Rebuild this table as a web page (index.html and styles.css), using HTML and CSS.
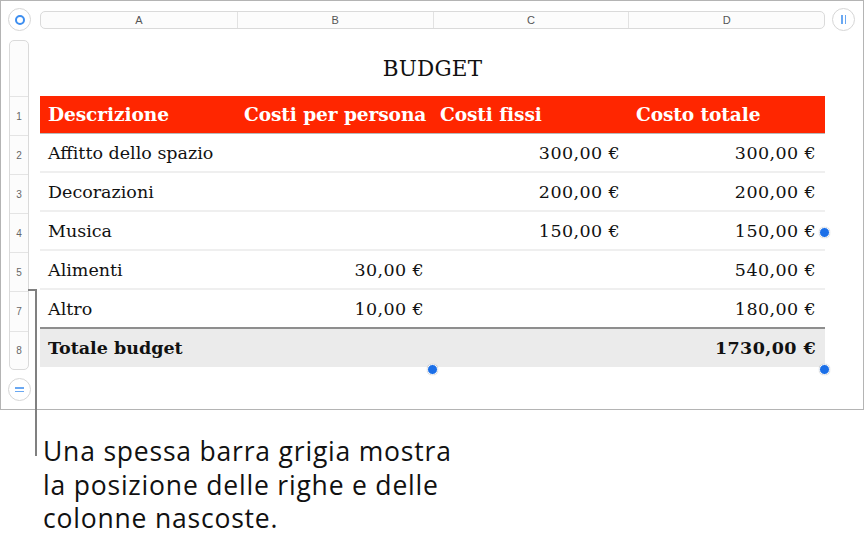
FILE: index.html
```html
<!DOCTYPE html>
<html lang="it">
<head>
<meta charset="utf-8">
<title>Budget</title>
<link rel="stylesheet" href="styles.css">
</head>
<body>
<div class="page">
  <div class="frame">
    <div class="corner-btn top-left"><span class="ring"></span></div>
    <div class="col-bar">
      <div class="col-seg">A</div>
      <div class="col-seg">B</div>
      <div class="col-seg">C</div>
      <div class="col-seg">D</div>
    </div>
    <div class="corner-btn top-right"><span class="pause"><i></i><i></i></span></div>

    <div class="row-bar">
      <div class="row-seg blank"></div>
      <div class="row-seg">1</div>
      <div class="row-seg">2</div>
      <div class="row-seg">3</div>
      <div class="row-seg">4</div>
      <div class="row-seg">5</div>
      <div class="row-seg tall">7</div>
      <div class="row-seg tall last">8</div>
    </div>

    <div class="sheet">
      <div class="title">BUDGET</div>
      <div class="trow head">
        <div class="cell">Descrizione</div>
        <div class="cell">Costi per persona</div>
        <div class="cell">Costi fissi</div>
        <div class="cell">Costo totale</div>
      </div>
      <div class="trow">
        <div class="cell">Affitto dello spazio</div>
        <div class="cell num"></div>
        <div class="cell num">300,00 €</div>
        <div class="cell num">300,00 €</div>
      </div>
      <div class="trow">
        <div class="cell">Decorazioni</div>
        <div class="cell num"></div>
        <div class="cell num">200,00 €</div>
        <div class="cell num">200,00 €</div>
      </div>
      <div class="trow">
        <div class="cell">Musica</div>
        <div class="cell num"></div>
        <div class="cell num">150,00 €</div>
        <div class="cell num">150,00 €</div>
      </div>
      <div class="trow">
        <div class="cell">Alimenti</div>
        <div class="cell num">30,00 €</div>
        <div class="cell num"></div>
        <div class="cell num">540,00 €</div>
      </div>
      <div class="trow">
        <div class="cell">Altro</div>
        <div class="cell num">10,00 €</div>
        <div class="cell num"></div>
        <div class="cell num">180,00 €</div>
      </div>
      <div class="trow total">
        <div class="cell">Totale budget</div>
        <div class="cell num"></div>
        <div class="cell num"></div>
        <div class="cell num">1730,00 €</div>
      </div>
    </div>

    <div class="corner-btn bottom-left"><span class="eq"><i></i><i></i></span></div>

    <span class="handle h-mid"></span>
    <span class="handle h-right"></span>
    <span class="handle h-corner"></span>
  </div>

  <div class="callout-line"></div>
  <p class="caption">Una spessa barra grigia mostra<br>la posizione delle righe e delle<br>colonne nascoste.</p>
</div>
</body>
</html>
```

FILE: styles.css
```css
* { box-sizing: border-box; }
html, body { margin: 0; padding: 0; background: #fff; }
body { width: 865px; height: 545px; overflow: hidden; }

.page { position: relative; width: 865px; height: 545px; }

.frame {
  position: relative;
  width: 864px;
  height: 410px;
  border: 1px solid #b4b4b4;
  display: grid;
  grid-template-columns: 39px 785px 1fr;
  grid-template-rows: 39px 331px 1fr;
}

.corner-btn {
  width: 23px;
  height: 23px;
  margin: 7px 0 0 7px;
  border: 1px solid #d6d6d6;
  border-radius: 50%;
  background: #fff;
  display: flex;
  align-items: center;
  justify-content: center;
}
.top-left { grid-column: 1; grid-row: 1; }
.top-right { grid-column: 3; grid-row: 1; margin-left: 7px; }
.bottom-left { grid-column: 1; grid-row: 3; margin-top: 7px; }

.ring {
  width: 10px;
  height: 10px;
  border: 2px solid #3d8ef0;
  border-radius: 50%;
}
.pause { display: flex; gap: 2px; }
.pause i { display: block; width: 1.5px; height: 9px; background: #6aa8f2; }
.eq { display: flex; flex-direction: column; gap: 2px; }
.eq i { display: block; width: 9px; height: 1.5px; background: #6aa8f2; }

.col-bar {
  grid-column: 2;
  grid-row: 1;
  margin-top: 10px;
  height: 18px;
  border: 1px solid #dadada;
  border-radius: 5px;
  background: #fcfcfc;
  display: grid;
  grid-template-columns: repeat(4, 1fr);
}
.col-seg {
  font: 11px "Liberation Sans", Arial, sans-serif;
  color: #555;
  display: flex;
  align-items: center;
  justify-content: center;
  border-left: 1px solid #e2e2e2;
}
.col-seg:first-child { border-left: none; }

.row-bar {
  grid-column: 1;
  grid-row: 2;
  margin-left: 8px;
  width: 20px;
  height: 330px;
  border: 1px solid #dadada;
  border-radius: 5px;
  background: #fcfcfc;
  display: flex;
  flex-direction: column;
}
.row-seg {
  height: 39px;
  border-top: 1px solid #e4e4e4;
  font: 10px "Liberation Sans", Arial, sans-serif;
  color: #666;
  display: flex;
  align-items: center;
  justify-content: center;
}
.row-seg.blank { height: 55px; border-top: none; }
.row-seg.tall { height: 40px; }
.row-seg.last { flex: 1; }

.sheet {
  grid-column: 2;
  grid-row: 2;
  display: flex;
  flex-direction: column;
  font-family: "DejaVu Serif", Georgia, serif;
  color: #111;
}
.title {
  height: 56px;
  display: flex;
  align-items: center;
  justify-content: center;
  font-size: 21.5px;
  padding-top: 1px;
  letter-spacing: 0.2px;
}
.trow {
  display: grid;
  grid-template-columns: repeat(4, 196px);
  height: 39px;
  border-bottom: 2px solid #efefef;
  font-size: 17.5px;
}
.trow.head {
  height: 38px;
  background: #ff2600;
  color: #fff;
  font-weight: bold;
  border-bottom: 1px solid #b9b9b9;
  font-size: 18.6px;
  letter-spacing: -0.1px;
}
.cell {
  display: flex;
  align-items: center;
  padding: 0 8px;
  white-space: nowrap;
}
.cell.num { justify-content: flex-end; letter-spacing: 0.4px; }
.trow.total {
  height: 40px;
  background: #ebebeb;
  border-top: 2px solid #8e8e8e;
  border-bottom: none;
  font-weight: bold;
  margin-top: -2px;
}

.handle {
  position: absolute;
  width: 11px;
  height: 11px;
  border-radius: 50%;
  background: #1b6fe8;
  border: 1.5px solid #fff;
  box-shadow: 0 0 1px rgba(0,0,0,0.35);
}
.h-mid { left: 426px; top: 363px; }
.h-right { left: 818px; top: 226px; }
.h-corner { left: 818px; top: 363px; }

.callout-line {
  position: absolute;
  left: 28px;
  top: 289px;
  width: 9px;
  height: 167px;
  border-top: 2px solid #808080;
  border-right: 2px solid #808080;
}

.caption {
  margin: 25px 0 0 43px;
  font: 26.5px/33.5px "Open Sans", "Liberation Sans", Arial, sans-serif;
  letter-spacing: 0.8px;
  color: #111;
}
```
